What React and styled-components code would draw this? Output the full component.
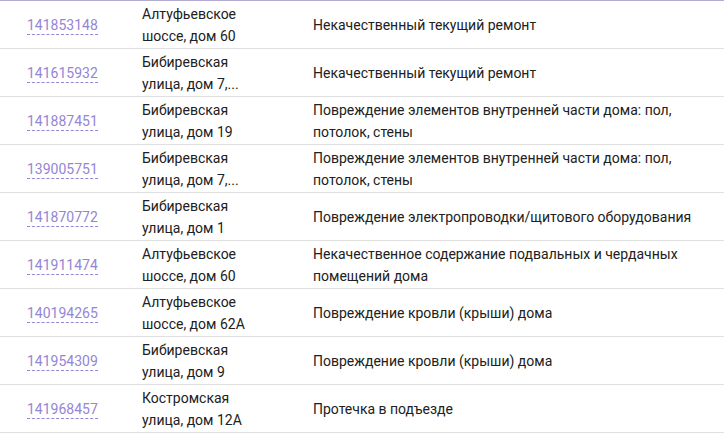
import React from 'react';
import styled, { createGlobalStyle } from 'styled-components';

const GlobalStyle = createGlobalStyle`
  html, body {
    margin: 0;
    padding: 0;
    background: #fff;
  }
  body {
    font-family: Roboto, 'Liberation Sans', sans-serif;
    font-size: 14px;
    color: #212121;
  }
`;

const rows = [
  { id: '141853148', address: 'Алтуфьевское шоссе, дом 60', issue: 'Некачественный текущий ремонт' },
  { id: '141615932', address: 'Бибиревская улица, дом 7,...', issue: 'Некачественный текущий ремонт' },
  { id: '141887451', address: 'Бибиревская улица, дом 19', issue: 'Повреждение элементов внутренней части дома: пол, потолок, стены' },
  { id: '139005751', address: 'Бибиревская улица, дом 7,...', issue: 'Повреждение элементов внутренней части дома: пол, потолок, стены' },
  { id: '141870772', address: 'Бибиревская улица, дом 1', issue: 'Повреждение электропроводки/щитового оборудования' },
  { id: '141911474', address: 'Алтуфьевское шоссе, дом 60', issue: 'Некачественное содержание подвальных и чердачных помещений дома' },
  { id: '140194265', address: 'Алтуфьевское шоссе, дом 62А', issue: 'Повреждение кровли (крыши) дома' },
  { id: '141954309', address: 'Бибиревская улица, дом 9', issue: 'Повреждение кровли (крыши) дома' },
  { id: '141968457', address: 'Костромская улица, дом 12А', issue: 'Протечка в подъезде' },
];

const Table = styled.div`
  width: 724px;
  border-top: 1px solid #b5acd6;
`;

const Row = styled.div`
  display: grid;
  grid-template-columns: 142px 171px 1fr;
  align-items: center;
  height: 47px;
  border-bottom: 1px solid #e0e0e0;
  line-height: 22px;
`;

const IdCell = styled.div`
  padding-left: 27px;
`;

const IdLink = styled.a`
  color: #9585d6;
  text-decoration: none;
  border-bottom: 1px dashed #9585d6;
  padding-bottom: 1px;
  cursor: pointer;
`;

const AddressCell = styled.div`
  width: 120px;
`;

const IssueCell = styled.div`
  padding-right: 0;
`;

export default function App() {
  return (
    <>
      <GlobalStyle />
      <Table>
        {rows.map((row) => (
          <Row key={row.id}>
            <IdCell>
              <IdLink>{row.id}</IdLink>
            </IdCell>
            <AddressCell>{row.address}</AddressCell>
            <IssueCell>{row.issue}</IssueCell>
          </Row>
        ))}
      </Table>
    </>
  );
}
